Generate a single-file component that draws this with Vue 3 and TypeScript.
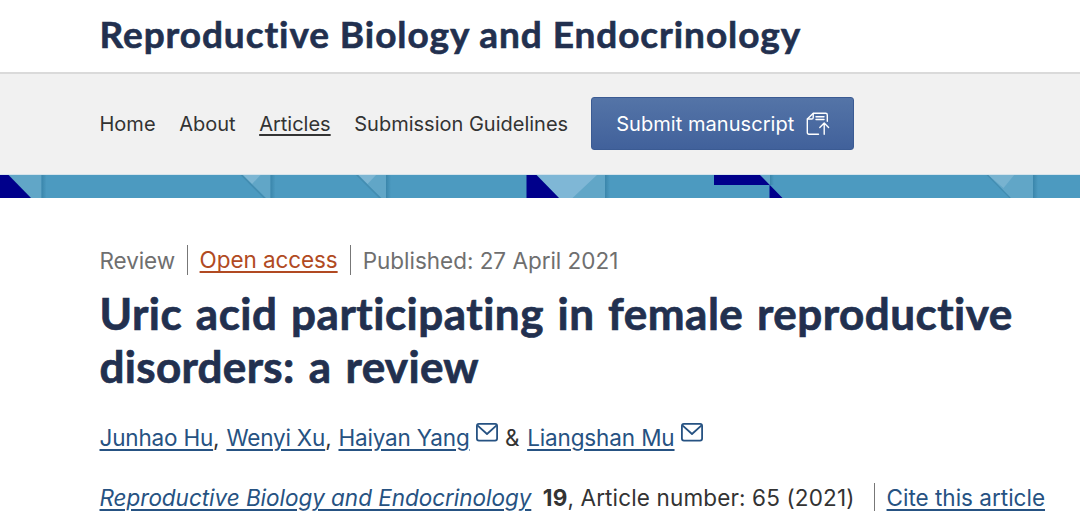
<script setup lang="ts">
interface NavItem {
  label: string
  key: string
  current?: boolean
}

const journal = 'Reproductive Biology and Endocrinology'

const navItems: NavItem[] = [
  { label: 'Home', key: 'home' },
  { label: 'About', key: 'about' },
  { label: 'Articles', key: 'articles', current: true },
  { label: 'Submission Guidelines', key: 'guidelines' },
]
</script>

<template>
  <div class="page">
    <header class="masthead">
      <div class="journal">{{ journal }}</div>
    </header>

    <nav class="nav">
      <a v-for="item in navItems" :key="item.key" class="nav-link" :class="{ current: item.current }">{{ item.label }}</a>
      <a class="submit">
        <span class="submit-label">Submit manuscript</span>
        <svg class="submit-icon" width="24" height="24" viewBox="0 0 24 24" fill="none" stroke="currentColor" stroke-width="1.4" stroke-linecap="round" stroke-linejoin="round">
          <path d="M12.5 22.3H3Q1.3 22.3 1.3 20.6V7L7.3 1.2H19.6Q21.3 1.2 21.3 2.9V9.2" />
          <path d="M1.5 7H5.6Q7.2 7 7.2 5.4V1.4" />
          <path d="M10 4.7H18M10 7.5H18" />
          <path d="M18.2 22.3V11.2M13.8 15.4L18.2 11L22.6 15.4" />
        </svg>
      </a>
    </nav>

    <svg class="band" width="1080" height="24" viewBox="0 174 1080 24">
      <defs>
        <linearGradient id="fold" x1="0" x2="1" y1="0" y2="0">
          <stop offset="0" stop-color="#3782a7" stop-opacity="0.85" />
          <stop offset="1" stop-color="#3782a7" stop-opacity="0" />
        </linearGradient>
      </defs>
      <rect y="174" width="1080" height="24" fill="#4c9ac0" />
      <path d="M8 174H41.5V198H31Z" fill="#61a6c7" />
      <path d="M0 174H7.5L31 198H0Z" fill="#00008b" />
      <rect x="41.5" y="174" width="5" height="24" fill="url(#fold)" />

      <g v-for="x in [0, 115.5]" :key="x" :transform="`translate(${x} 0)`">
        <path d="M241 174H270.5V198H266Z" fill="#61a6c7" />
        <path d="M242 174H261.5L252 184Z" fill="#7db6d3" />
        <path d="M240.5 174L265 198.5" stroke="#438db1" stroke-width="1.6" />
        <rect x="270.5" y="174" width="5" height="24" fill="url(#fold)" />
      </g>

      <path d="M536 174H605V198H559Z" fill="#61a6c7" />
      <path d="M536 174H598L572.5 198H559Z" fill="#7fb7d6" />
      <path d="M526.5 174H535.5L559 198H526.5Z" fill="#00008b" />
      <rect x="605" y="174" width="5" height="24" fill="url(#fold)" />

      <path d="M759 174H770V186Z" fill="#61a6c7" />
      <rect x="770" y="174" width="4" height="11" fill="url(#fold)" />
      <path d="M714 174H759L782.5 198H769.5V185H714Z" fill="#00008b" />

      <path d="M987 174H1033V198H1011Z" fill="#61a6c7" />
      <path d="M987 174H1015L1003.5 188Z" fill="#78b3d0" />
      <path d="M986.5 174L1010 198" stroke="#438db1" stroke-width="1.2" />
      <rect x="1033" y="174" width="5" height="24" fill="url(#fold)" />
      <rect y="174" width="1080" height="1" fill="#d6e4eb" />
    </svg>

    <main class="article">
      <div class="meta">
        <span class="kind">Review</span>
        <span class="access-cell"><a class="access">Open access</a></span>
        <span class="published">Published: 27 April 2021</span>
      </div>

      <h1 class="title">
        <span class="title-line first">Uric acid participating in female reproductive</span>
        <span class="title-line second">disorders: a review</span>
      </h1>

      <div class="authors">
        <span class="author"><a class="link">Junhao Hu</a>,</span>
        <span class="author"><a class="link">Wenyi Xu</a>,</span>
        <span class="author with-mail">
          <a class="link">Haiyan Yang</a>
          <svg class="mail" width="22" height="19" viewBox="0 0 22 19" fill="none" stroke="currentColor" stroke-width="1.8" stroke-linejoin="round" stroke-linecap="round">
            <rect x="0.9" y="0.9" width="20.2" height="16.7" rx="2" />
            <path d="M2 2.8L11 11L20 2.8" />
          </svg>
        </span>
        <span class="amp">&amp;</span>
        <span class="author with-mail">
          <a class="link last">Liangshan Mu</a>
          <svg class="mail" width="22" height="19" viewBox="0 0 22 19" fill="none" stroke="currentColor" stroke-width="1.8" stroke-linejoin="round" stroke-linecap="round">
            <rect x="0.9" y="0.9" width="20.2" height="16.7" rx="2" />
            <path d="M2 2.8L11 11L20 2.8" />
          </svg>
        </span>
      </div>

      <div class="citation">
        <a class="link source">{{ journal }}</a>
        <span class="number"><b>19</b>, Article number: 65 (2021)</span>
        <span class="cite-cell"><a class="link cite">Cite this article</a></span>
      </div>
    </main>
  </div>
</template>

<style>
body {
  background: #fff;
}
</style>

<style scoped>
.page {
  width: 1080px;
  height: 531px;
  overflow: hidden;
  background: #fff;
  font-family: Inter, "Liberation Sans", sans-serif;
  font-size: 22.5px;
  color: #333;
  white-space: nowrap;
}
.masthead {
  box-sizing: border-box;
  height: 74px;
  padding: 11px 0 0 99.5px;
  border-bottom: 2px solid #dadada;
}
.journal {
  font-family: Lato, sans-serif;
  font-weight: 700;
  font-size: 37px;
  line-height: 46px;
  color: #22304f;
  letter-spacing: 0.92px;
  -webkit-text-stroke: 0.6px #22304f;
}
.nav {
  display: flex;
  align-items: center;
  box-sizing: border-box;
  height: 100px;
  padding: 0 0 1px 99.5px;
  gap: 23.6px;
  background: #f1f1f1;
  font-size: 20px;
}
.nav-link.current {
  text-decoration: underline;
  text-decoration-thickness: 1.5px;
  text-underline-offset: 3px;
}
.submit {
  display: flex;
  align-items: center;
  box-sizing: border-box;
  width: 263px;
  height: 53px;
  margin-left: -1px;
  padding-left: 24.5px;
  gap: 12px;
  border: 1px solid #3b5b93;
  border-radius: 3px;
  background: linear-gradient(#5474a7, #41619b);
  color: #fff;
}
.submit-label {
  letter-spacing: 0.05px;
}
.submit-icon {
  flex: none;
}
.band {
  display: block;
}
.article {
  padding: 47px 0 0 99.5px;
}
.meta {
  display: flex;
  align-items: center;
  height: 30px;
  color: #6f6f6f;
  letter-spacing: -0.08px;
}
.access-cell {
  padding: 0 12px 0 11.5px;
  margin: 0 12px;
  border-left: 1.5px solid #777;
  border-right: 1.5px solid #777;
  line-height: 30px;
}
.access {
  color: #b14a22;
  text-decoration: underline;
  text-decoration-thickness: 1.5px;
  text-underline-offset: 3px;
  text-decoration-skip-ink: none;
}
.published {
  letter-spacing: -0.02px;
}
.title {
  margin: 12px 0 0;
  font-family: Lato, sans-serif;
  font-weight: 700;
  font-size: 44px;
  line-height: 53px;
  color: #22304f;
  -webkit-text-stroke: 0.7px #22304f;
}
.title-line {
  display: block;
}
.first {
  letter-spacing: 0.5px;
  word-spacing: 2.4px;
}
.second {
  letter-spacing: 0.3px;
  word-spacing: 3.2px;
}
.authors {
  display: flex;
  margin-top: 30px;
  height: 30px;
  line-height: 30px;
  gap: 7px;
  letter-spacing: -0.18px;
}
.with-mail {
  display: flex;
  gap: 6.5px;
}
.amp {
  margin-right: 0.8px;
}
.link {
  color: #265282;
  text-decoration: underline;
  text-decoration-thickness: 1.5px;
  text-underline-offset: 3px;
}
.last {
  letter-spacing: -0.13px;
}
.mail {
  color: #265282;
}
.citation {
  display: flex;
  margin-top: 30px;
  height: 30px;
  line-height: 30px;
}
.source {
  font-style: italic;
  letter-spacing: -0.03px;
}
.number {
  margin-left: 11.5px;
  letter-spacing: 0.14px;
}
.cite-cell {
  margin-left: 19px;
  padding-left: 12px;
  border-left: 1.5px solid #777;
  height: 28px;
}
</style>
